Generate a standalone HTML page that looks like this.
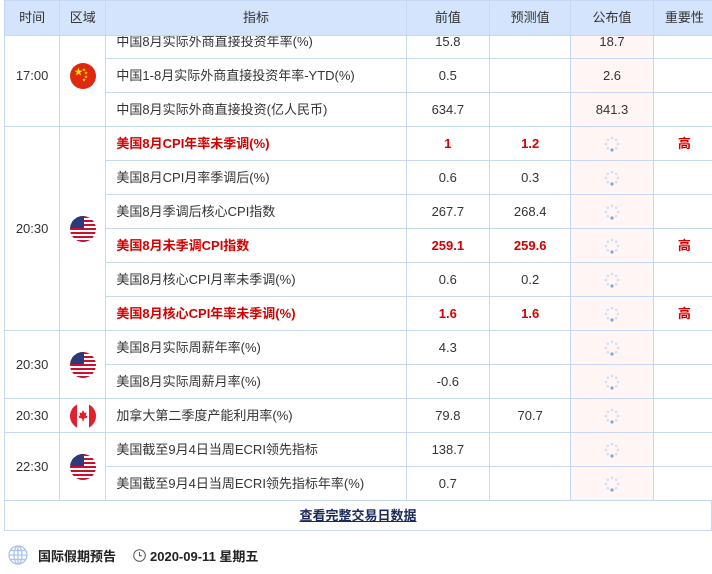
<!DOCTYPE html>
<html><head><meta charset="utf-8"><style>
body{margin:0;width:712px;height:574px;overflow:hidden;background:#fff;font-family:"Liberation Sans","Noto Sans CJK SC",sans-serif;font-size:13px;color:#333;position:relative}
table{position:absolute;left:4px;top:0;border-collapse:collapse;table-layout:fixed;width:712px}
td,th{border:1px solid #c6d8f3;padding:0;text-align:center;overflow:hidden;white-space:nowrap;line-height:14px}
th{background:#d3e4fc;height:34px;font-weight:normal;color:#333;font-size:13px}
tr.n td{height:33px}
tr.first td{height:22px}
td.ind{text-align:left;padding-left:10px}
td.pub{background:#fff5f5}
tr.r td{color:#d40000;font-weight:bold}
tr.top td{border-top:1px solid #e06666}
.f{width:26px;height:26px;display:block;margin:auto}
.sp{width:16px;height:16px;display:block;margin:auto}
.foot{position:absolute;left:4px;top:501px;width:708px;height:30px;border:1px solid #c6d8f3;border-top:none;box-sizing:border-box;text-align:center;line-height:30px;font-weight:bold;font-size:13px}
.foot a{color:#1a2a5a;text-decoration:underline}
.bot{position:absolute;left:8px;top:545px;font-weight:bold;font-size:13px;color:#222;display:flex;align-items:center}
.t{vertical-align:top;line-height:12px}
</style></head><body>
<svg width="0" height="0" style="position:absolute"><defs>
<clipPath id="c"><circle cx="13" cy="13" r="13"/></clipPath>
<g id="us"><g clip-path="url(#c)"><rect width="26" height="26" fill="#fff"/><rect y="0" width="26" height="2" fill="#c8102e"/><rect y="4" width="26" height="2" fill="#c8102e"/><rect y="8" width="26" height="2" fill="#c8102e"/><rect y="12" width="26" height="2" fill="#c8102e"/><rect y="16" width="26" height="2" fill="#c8102e"/><rect y="20" width="26" height="2" fill="#c8102e"/><rect y="24" width="26" height="2" fill="#c8102e"/><rect width="14" height="12" fill="#2b3b7a"/></g></g>
<g id="sp"><circle cx="8" cy="2" r="1.3" fill="#cfe0f5"/><circle cx="12.2" cy="3.8" r="1.3" fill="#cfe0f5"/><circle cx="14" cy="8" r="1.3" fill="#cfe0f5"/><circle cx="12.2" cy="12.2" r="1.3" fill="#cfe0f5"/><circle cx="8" cy="14" r="1.6" fill="#7fa7d9"/><circle cx="3.8" cy="12.2" r="1.3" fill="#cfe0f5"/><circle cx="2" cy="8" r="1.3" fill="#cfe0f5"/><circle cx="3.8" cy="3.8" r="1.3" fill="#cfe0f5"/></g>
</defs></svg>
<table>
<colgroup><col style="width:55px"><col style="width:46px"><col style="width:299px"><col style="width:83px"><col style="width:81px"><col style="width:82px"><col style="width:62px"></colgroup>
<tr><th>时间</th><th>区域</th><th>指标</th><th>前值</th><th>预测值</th><th>公布值</th><th>重要性</th></tr>
<tr class="first"><td rowspan="3" style="height:auto;padding-bottom:10px">17:00</td><td rowspan="3" style="height:auto;padding-bottom:10px"><svg class="f" viewBox="0 0 26 26"><circle cx="13" cy="13" r="13" fill="#de2910"/><text x="4" y="12" font-size="9" fill="#ffde00">★</text><text x="12" y="8" font-size="4" fill="#ffde00">★</text><text x="14" y="11" font-size="4" fill="#ffde00">★</text><text x="14" y="15" font-size="4" fill="#ffde00">★</text><text x="12" y="18" font-size="4" fill="#ffde00">★</text></svg></td><td class="ind t">中国8月实际外商直接投资年率(%)</td><td class="t">15.8</td><td></td><td class="pub t">18.7</td><td></td></tr>
<tr class="n"><td class="ind">中国1-8月实际外商直接投资年率-YTD(%)</td><td>0.5</td><td></td><td class="pub">2.6</td><td></td></tr>
<tr class="n"><td class="ind">中国8月实际外商直接投资(亿人民币)</td><td>634.7</td><td></td><td class="pub">841.3</td><td></td></tr>
<tr class="n r top"><td rowspan="6" style="color:#333;font-weight:normal">20:30</td><td rowspan="6"><svg class="f" viewBox="0 0 26 26"><use href="#us"/></svg></td><td class="ind">美国8月CPI年率未季调(%)</td><td>1</td><td>1.2</td><td class="pub"><svg class="sp" viewBox="0 0 16 16"><use href="#sp"/></svg></td><td>高</td></tr>
<tr class="n"><td class="ind">美国8月CPI月率季调后(%)</td><td>0.6</td><td>0.3</td><td class="pub"><svg class="sp" viewBox="0 0 16 16"><use href="#sp"/></svg></td><td></td></tr>
<tr class="n"><td class="ind">美国8月季调后核心CPI指数</td><td>267.7</td><td>268.4</td><td class="pub"><svg class="sp" viewBox="0 0 16 16"><use href="#sp"/></svg></td><td></td></tr>
<tr class="n r"><td class="ind">美国8月未季调CPI指数</td><td>259.1</td><td>259.6</td><td class="pub"><svg class="sp" viewBox="0 0 16 16"><use href="#sp"/></svg></td><td>高</td></tr>
<tr class="n"><td class="ind">美国8月核心CPI月率未季调(%)</td><td>0.6</td><td>0.2</td><td class="pub"><svg class="sp" viewBox="0 0 16 16"><use href="#sp"/></svg></td><td></td></tr>
<tr class="n r"><td class="ind">美国8月核心CPI年率未季调(%)</td><td>1.6</td><td>1.6</td><td class="pub"><svg class="sp" viewBox="0 0 16 16"><use href="#sp"/></svg></td><td>高</td></tr>
<tr class="n"><td rowspan="2">20:30</td><td rowspan="2"><svg class="f" viewBox="0 0 26 26"><use href="#us"/></svg></td><td class="ind">美国8月实际周薪年率(%)</td><td>4.3</td><td></td><td class="pub"><svg class="sp" viewBox="0 0 16 16"><use href="#sp"/></svg></td><td></td></tr>
<tr class="n"><td class="ind">美国8月实际周薪月率(%)</td><td>-0.6</td><td></td><td class="pub"><svg class="sp" viewBox="0 0 16 16"><use href="#sp"/></svg></td><td></td></tr>
<tr class="n"><td>20:30</td><td><svg class="f" viewBox="0 0 26 26"><g clip-path="url(#c)"><rect width="26" height="26" fill="#fff"/><rect width="7" height="26" fill="#e0202a"/><rect x="19" width="7" height="26" fill="#e0202a"/><path d="M13 7 L14.5 10 L16.5 9.5 L15.8 13 L17.5 12.5 L16.8 15 L14 15.5 L13.5 18 L12.5 18 L12 15.5 L9.2 15 L8.5 12.5 L10.2 13 L9.5 9.5 L11.5 10 Z" fill="#e0202a"/></g></svg></td><td class="ind">加拿大第二季度产能利用率(%)</td><td>79.8</td><td>70.7</td><td class="pub"><svg class="sp" viewBox="0 0 16 16"><use href="#sp"/></svg></td><td></td></tr>
<tr class="n"><td rowspan="2">22:30</td><td rowspan="2"><svg class="f" viewBox="0 0 26 26"><use href="#us"/></svg></td><td class="ind">美国截至9月4日当周ECRI领先指标</td><td>138.7</td><td></td><td class="pub"><svg class="sp" viewBox="0 0 16 16"><use href="#sp"/></svg></td><td></td></tr>
<tr class="n"><td class="ind">美国截至9月4日当周ECRI领先指标年率(%)</td><td>0.7</td><td></td><td class="pub"><svg class="sp" viewBox="0 0 16 16"><use href="#sp"/></svg></td><td></td></tr>
</table>
<div class="foot"><a>查看完整交易日数据</a></div>
<div class="bot"><svg width="20" height="20" viewBox="0 0 20 20" fill="none" stroke="#a9c4ea" stroke-width="1.3"><circle cx="10" cy="10" r="9"/><ellipse cx="10" cy="10" rx="4" ry="9"/><line x1="1" y1="10" x2="19" y2="10"/><line x1="2.5" y1="5.5" x2="17.5" y2="5.5"/><line x1="2.5" y1="14.5" x2="17.5" y2="14.5"/><line x1="10" y1="1" x2="10" y2="19"/></svg><span style="margin-left:10px">国际假期预告</span><svg style="margin-left:17px" width="13" height="13" viewBox="0 0 13 13" fill="none" stroke="#555" stroke-width="1"><circle cx="6.5" cy="6.5" r="5.8"/><path d="M6.5 3v3.7h2.5"/></svg><span style="margin-left:4px">2020-09-11 星期五</span></div>
</body></html>
